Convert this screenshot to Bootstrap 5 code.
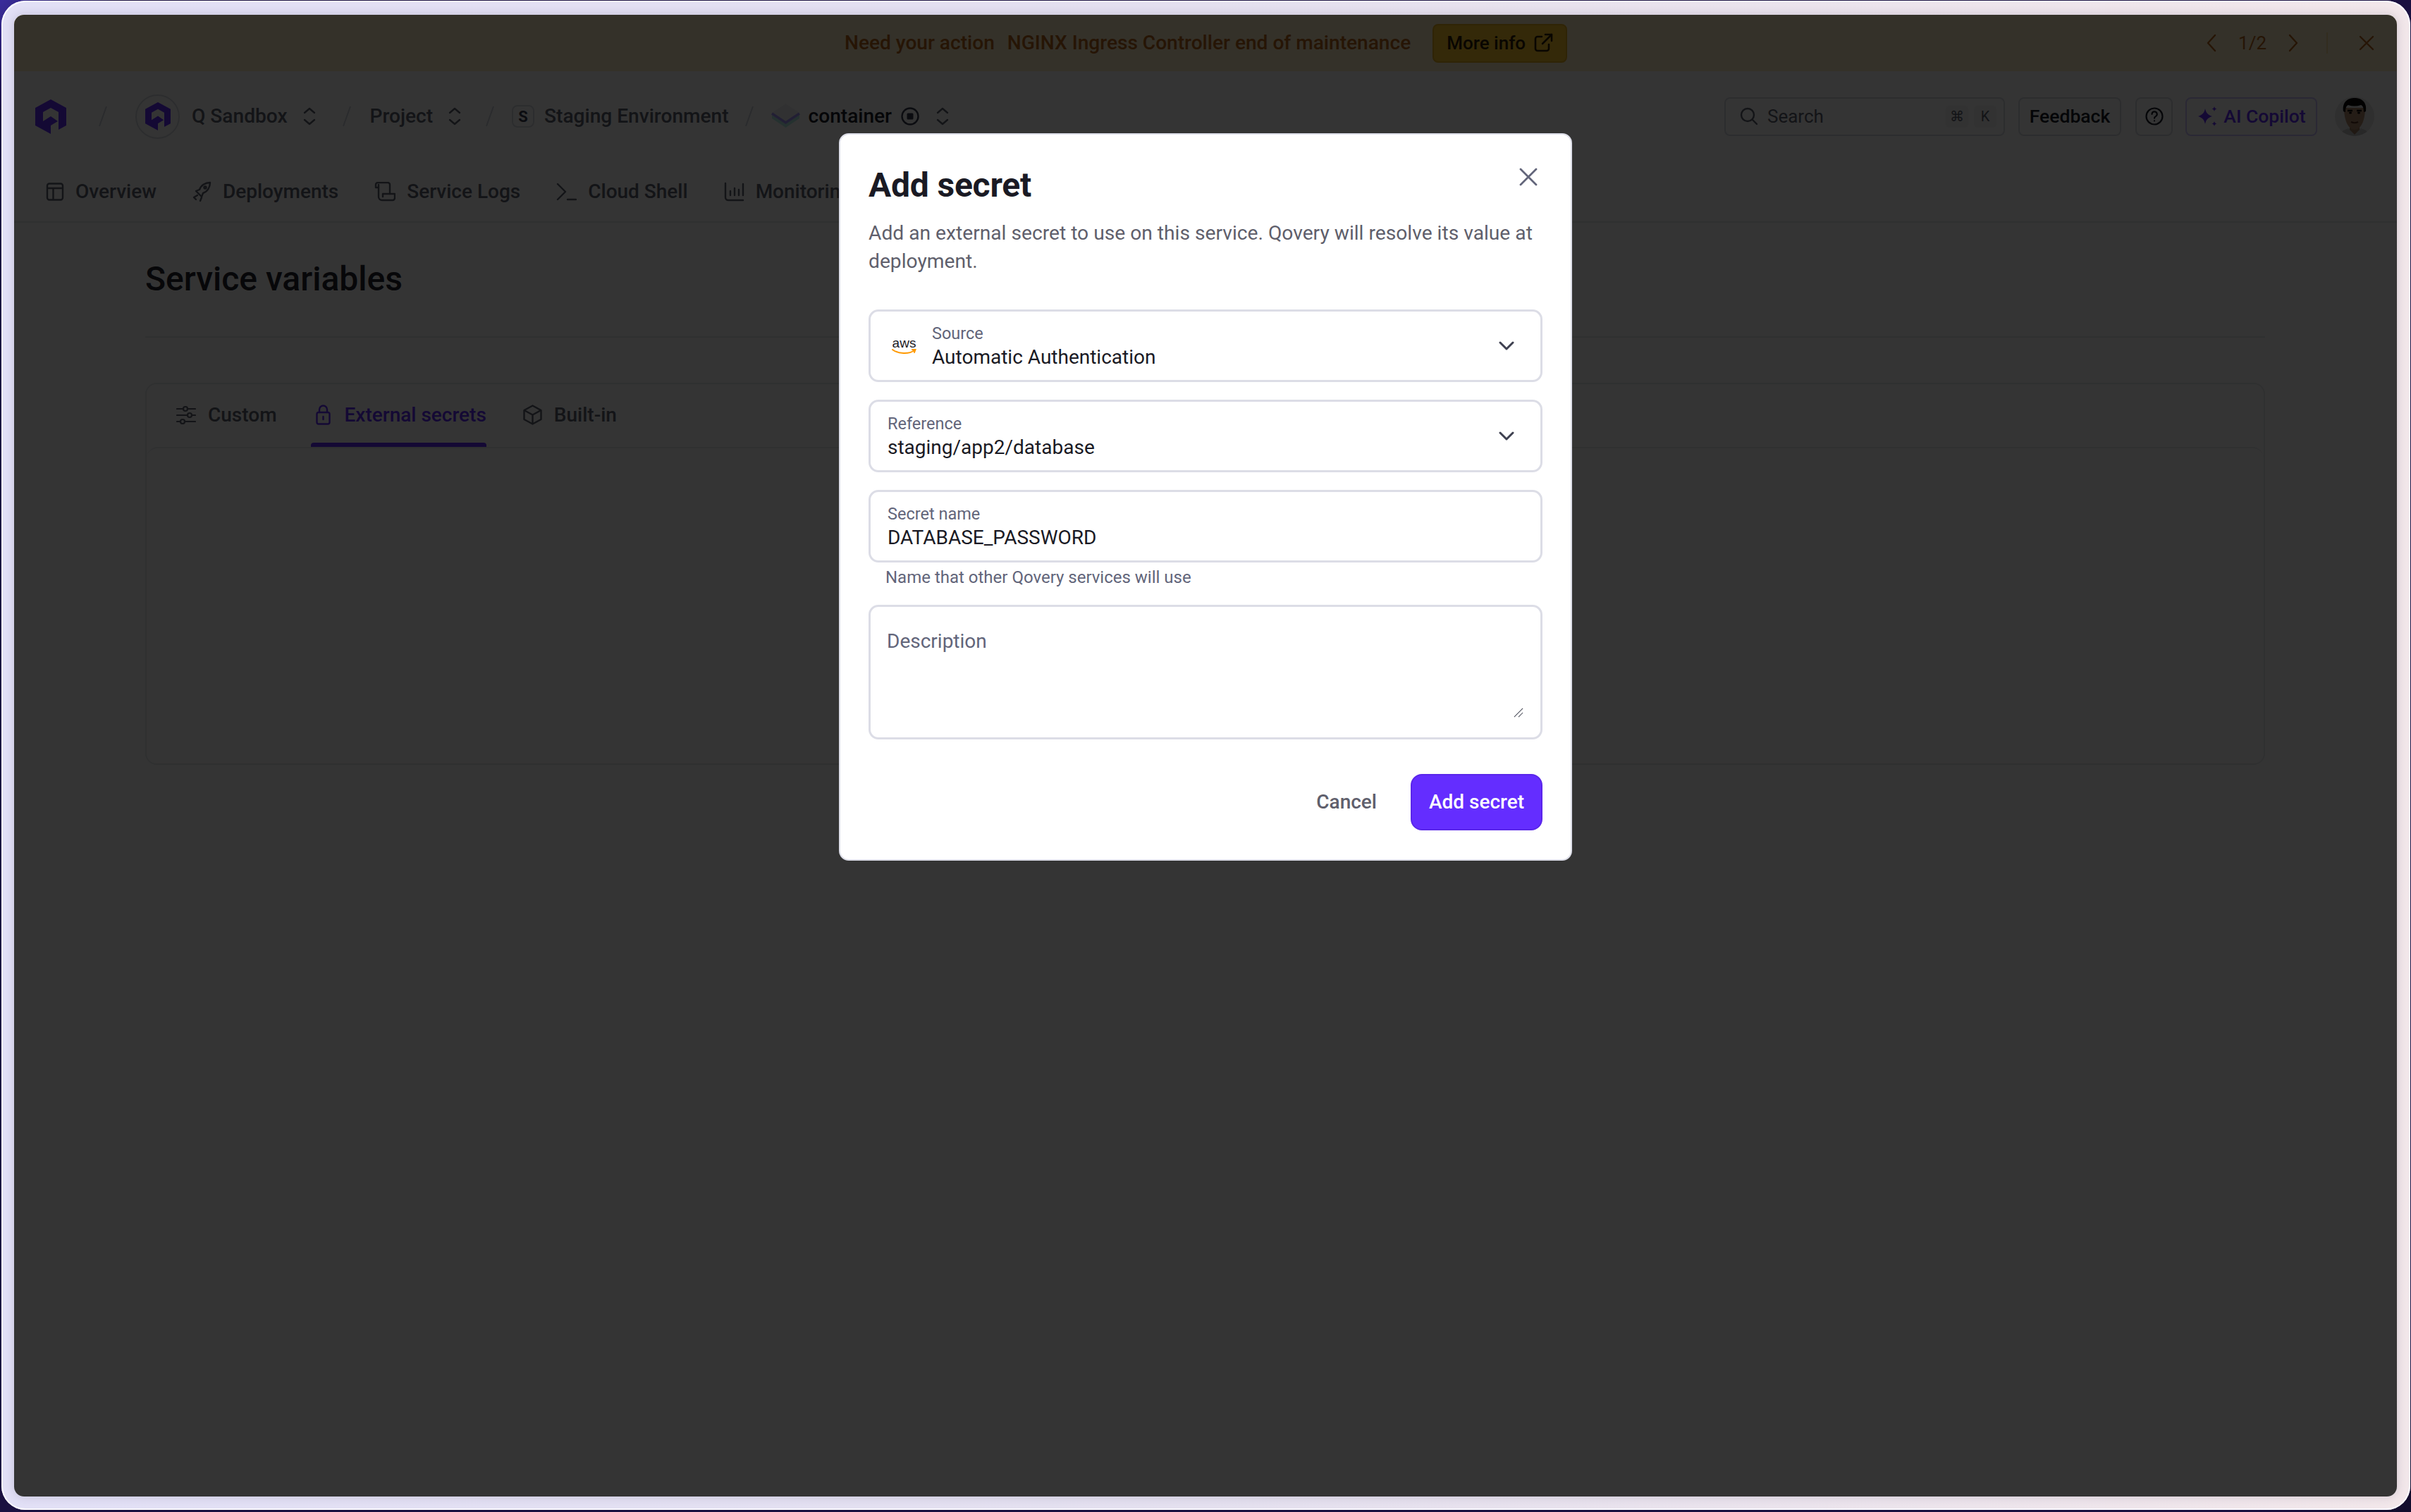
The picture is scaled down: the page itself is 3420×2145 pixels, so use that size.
<!DOCTYPE html>
<html lang="en">
<head>
<meta charset="UTF-8">
<meta name="viewport" content="width=device-width, initial-scale=1.0">
<title>Service variables</title>
<link href="https://cdn.jsdelivr.net/npm/bootstrap@5.3.3/dist/css/bootstrap.min.css" rel="stylesheet">
<style>
    html, body { height: 100%; }
    body {
        margin: 0; overflow: hidden; font-family: Roboto, sans-serif; font-size: 26px; color: #383e50;
        background: linear-gradient(135deg, #3a2d9c 0%, #1a1040 3%, #1a1040 96%, #120c2c 100%);
    }
    svg { display: block; flex: none; }
    .frame {
        height: 2141px; margin: 1px 1px 3px 2px; padding: 20px 19px 19px 18px; border-radius: 34px;
        background: linear-gradient(90deg, #e2e0f6, #e4e0ef 50%, #f2e7ea);
        box-shadow: inset 0 0 0 2px #fbfaff;
    }
    .panel {
        position: relative; height: 100%; overflow: hidden; background: #fff; border-radius: 14px;
        box-shadow: 0 0 14px rgba(60, 50, 90, .18);
    }
    .scrim { position: absolute; inset: 0; background: rgba(0, 0, 0, .795); z-index: 10; }

    /* announcement */
    .promo { height: 80px; background: #fff0c8; color: #b8661c; font-size: 28.1px; font-weight: 500; }
    .promo-msg { margin-left: 1178px; }
    .promo-msg span + span { margin-left: 18px; }
    .promo-btn {
        height: 55px; margin-left: 31px; padding: 0 18px; font-size: 26px; font-weight: 500; color: #2e2105;
        background: #ffc830; border: 2px solid #e6ae20; border-radius: 8px; gap: 11px;
    }
    .promo-pager { margin-left: auto; margin-right: 32px; color: #b8661c; font-size: 26px; font-weight: 400; }
    .promo-rule { width: 2px; height: 30px; background: #f5dc9a; margin: 0 44px 0 40px; }

    /* top bar */
    .topbar { height: 128px; padding: 0 32px 0 30px; }
    .crumb-sep { width: 12px; height: 30px; color: #ced2dc; }
    .org-ring { width: 63px; height: 63px; border: 2px solid #d9dbe3; border-radius: 50%; }
    .crumb-label { font-size: 28.1px; font-weight: 500; color: #5d6270; white-space: nowrap; }
    .crumb-current { color: #1a1d2b; }
    .env-badge {
        width: 32px; height: 32px; border: 2px solid #d9dbe3; border-radius: 8px; font-size: 22px; font-weight: 700; color: #383e50;
    }
    .updown { color: #5d6270; }
    .s12 { margin-left: 12px; } .s13 { margin-left: 13px; } .s14 { margin-left: 14px; } .s17 { margin-left: 17px; }
    .s21 { margin-left: 21px; } .s23 { margin-left: 23px; } .s25 { margin-left: 25px; } .s27 { margin-left: 27px; } .s31 { margin-left: 31px; }
    .s34 { margin-left: 34px; } .s37 { margin-left: 37px; } .s40 { margin-left: 40px; } .s46 { margin-left: 46px; }
    .tool-btn {
        height: 55px; padding: 0; font-size: 26.5px; font-weight: 500; color: #1a1d2b; background: #fff;
        border: 2px solid #d9dbe3; border-radius: 8px;
    }
    .search-box {
        width: 398px; height: 55px; padding: 0 10px 0 20px; border: 2px solid #d9dbe3; border-radius: 8px;
        color: #5d6270; font-size: 26px;
    }
    .key-cap {
        width: 32px; height: 31px; border-radius: 5px; background: #f4f4f6; color: #5d6270; font-size: 20px;
    }
    .btn-feedback { width: 146px; margin-left: 19px; }
    .btn-help { width: 53px; margin-left: 20px; }
    .btn-copilot { width: 187px; margin-left: 18px; padding-left: 2px; color: #642dff; border-color: #cfc2ff; gap: 8px; }
    .avatar-pic { width: 56px; height: 56px; margin-left: 25px; border-radius: 50%; overflow: hidden; }

    /* service tabs */
    .service-tabs { height: 87px; padding-left: 45px; border-bottom: 2px solid #e7e8ec; gap: 51px; }
    .service-tab { gap: 16px; font-size: 28px; font-weight: 500; color: #5d6270; white-space: nowrap; }

    /* variables page */
    .page-body { padding: 50px 187px 0 186px; }
    .page-head { height: 113px; border-bottom: 2px solid #e7e8ec; }
    .page-title { font-size: 48px; line-height: 60px; font-weight: 500; margin: 0; color: #222530; }
    .vars-card { margin-top: 64px; height: 542px; border: 2px solid #e7e8ec; border-radius: 16px; background: #fff; }
    .vars-tabs { height: 89px; padding-left: 40px; gap: 0; }
    .vars-tab {
        position: relative; height: 89px; gap: 17px; padding: 0 2px 2px; margin-right: 46px;
        font-size: 28px; font-weight: 500; color: #5d6270;
    }
    .vars-tab-on { color: #642dff; padding: 0 0 2px 7px; margin-right: 50px; gap: 20px; }
    .vars-tab-on::after {
        content: ""; position: absolute; left: 0; right: 0; bottom: 0; height: 6px; background: #642dff; border-radius: 4px 4px 0 0;
    }
    .vars-body { flex: 1; border-top: 2px solid #e7e8ec; border-radius: 16px 16px 0 0; }

    /* dialog */
    .dialog-wrap { position: absolute; inset: 0; z-index: 20; padding-top: 168px; }
    .dialog {
        position: relative; width: 1040px; height: 1032px; padding: 42px 40px 0 40px;
        border: 2px solid #dddee8; border-radius: 14px; background: #fff;
    }
    .dialog-title { font-size: 48px; line-height: 60px; font-weight: 700; color: #1a1a24; margin: 0 0 18px; letter-spacing: -.2px; }
    .dialog-desc { font-size: 28.2px; line-height: 40px; color: #5f5f6c; margin: 0 0 48px; }
    .dialog-close { position: absolute; top: 47px; right: 47px; width: 26px; height: 26px; padding: 0; border: 0; background: none; color: #62657a; }
    .fld {
        height: 103px; margin-bottom: 25px; padding: 0 37px 0 24px; border: 3px solid #dcdde6; border-radius: 14px;
    }
    .fld-aws { padding-left: 30px; }
    .fld-label { font-size: 23.5px; line-height: 32px; color: #62657a; }
    .fld-value { font-size: 28px; line-height: 36px; color: #1a1a24; }
    .aws-mark { width: 35px; margin-right: 22px; flex: none; color: #1a1a24; font-family: "Liberation Sans", sans-serif; font-size: 19px; line-height: 17px; text-align: center; }
    .fld-hint { font-size: 24px; line-height: 32px; color: #62657a; margin: 5px 0 23px 24px; }
    .fld-area { position: relative; height: 191px; padding: 30px 25px 31px; margin-bottom: 49px; border: 3px solid #dcdde6; border-radius: 14px; }
    .fld-area label { position: absolute; left: 23px; top: 29px; font-size: 28px; line-height: 40px; color: #62657a; }
    .fld-area textarea { display: block; width: 100%; height: 124px; padding: 0; border: 0; outline: 0; background: none; resize: none; }
    .grip { position: absolute; right: 24px; bottom: 28px; }
    .btn-plain { padding: 0; margin-right: 48px; font-size: 28px; font-weight: 500; color: #5f5f6c; background: none; border: 0; }
    .btn-violet {
        width: 187px; height: 80px; padding: 0; font-size: 28px; font-weight: 500; color: #fff;
        background: #642dff; border: 2px solid #5a26ea; border-radius: 16px;
    }
</style>
</head>
<body>
<div class="frame">
    <div class="panel">
        <div class="promo d-flex align-items-center">
            <div class="promo-msg"><span>Need your action</span><span>NGINX Ingress Controller end of maintenance</span></div>
            <button class="btn promo-btn d-flex align-items-center">More info
                <svg width="28" height="28" viewBox="0 0 28 28" fill="none" stroke="currentColor" stroke-width="2.6" stroke-linecap="round" stroke-linejoin="round"><path d="M12 5H6a3 3 0 0 0-3 3v14a3 3 0 0 0 3 3h13a3 3 0 0 0 3-3v-6"/><path d="M13 15 26 2"/><path d="M17 2h9v9"/></svg>
            </button>
            <div class="promo-pager d-flex align-items-center">
                <svg width="14" height="26" viewBox="0 0 14 26" fill="none" stroke="currentColor" stroke-width="2.4" stroke-linecap="round" stroke-linejoin="round"><path d="M12 2 2 13l10 11"/></svg>
                <span class="s31">1/2</span>
                <svg class="s31" width="14" height="26" viewBox="0 0 14 26" fill="none" stroke="currentColor" stroke-width="2.4" stroke-linecap="round" stroke-linejoin="round"><path d="m2 2 10 11L2 24"/></svg>
                <span class="promo-rule"></span>
                <svg width="22" height="22" viewBox="0 0 22 22" fill="none" stroke="currentColor" stroke-width="2.4" stroke-linecap="round"><path d="M2 2l18 18M20 2 2 20"/></svg>
            </div>
        </div>

        <div class="topbar d-flex align-items-center">
            <svg width="44" height="49" viewBox="0 0 44 49" fill="#642dff"><path d="M22 0 44 12V37L33 43V18L22 12 11 18V31L22 24 32 31 22 37V49L0 37V12Z"/></svg>
            <svg class="crumb-sep s46" viewBox="0 0 12 30" fill="none" stroke="currentColor" stroke-width="2"><path d="M11 1 1 29"/></svg>
            <div class="org-ring s40 d-flex align-items-center justify-content-center">
                <svg width="36" height="40" viewBox="0 0 44 49" fill="#642dff"><path d="M22 0 44 12V37L33 43V18L22 12 11 18V31L22 24 32 31 22 37V49L0 37V12Z"/></svg>
            </div>
            <span class="crumb-label s17">Q Sandbox</span>
            <svg class="updown s21" width="20" height="26" viewBox="0 0 20 26" fill="none" stroke="currentColor" stroke-width="2.4" stroke-linecap="round" stroke-linejoin="round"><path d="m3 8 7-6 7 6M3 18l7 6 7-6"/></svg>
            <svg class="crumb-sep s37" viewBox="0 0 12 30" fill="none" stroke="currentColor" stroke-width="2"><path d="M11 1 1 29"/></svg>
            <span class="crumb-label s27">Project</span>
            <svg class="updown s21" width="20" height="26" viewBox="0 0 20 26" fill="none" stroke="currentColor" stroke-width="2.4" stroke-linecap="round" stroke-linejoin="round"><path d="m3 8 7-6 7 6M3 18l7 6 7-6"/></svg>
            <svg class="crumb-sep s34" viewBox="0 0 12 30" fill="none" stroke="currentColor" stroke-width="2"><path d="M11 1 1 29"/></svg>
            <span class="env-badge s25 d-flex align-items-center justify-content-center">S</span>
            <span class="crumb-label s14">Staging Environment</span>
            <svg class="crumb-sep s23" viewBox="0 0 12 30" fill="none" stroke="currentColor" stroke-width="2"><path d="M11 1 1 29"/></svg>
            <svg class="s25" width="41" height="36" viewBox="0 0 41 36"><path d="M20.5 0 40 13 20.5 25 1 13Z" fill="#f0f1f5"/><path d="M1 16v5l19.500 13L40 21v-5L20.500 28Z" fill="#b4efe6"/><path d="M1 14l19.500 13L40 14" fill="none" stroke="#a898ff" stroke-width="3.500"/></svg>
            <span class="crumb-label crumb-current s12">container</span>
            <svg class="s13" width="26" height="26" viewBox="0 0 26 26"><circle cx="13" cy="13" r="11.5" fill="none" stroke="#383e50" stroke-width="2.4"/><rect x="8.5" y="8.5" width="9" height="9" rx="1.5" fill="#383e50"/></svg>
            <svg class="updown s23" width="20" height="26" viewBox="0 0 20 26" fill="none" stroke="currentColor" stroke-width="2.4" stroke-linecap="round" stroke-linejoin="round"><path d="m3 8 7-6 7 6M3 18l7 6 7-6"/></svg>

            <div class="search-box ms-auto d-flex align-items-center">
                <svg width="26" height="26" viewBox="0 0 26 26" fill="none" stroke="currentColor" stroke-width="2.4" stroke-linecap="round"><circle cx="11" cy="11" r="9"/><path d="m18 18 6 6"/></svg>
                <span class="s13">Search</span>
                <span class="key-cap ms-auto d-flex align-items-center justify-content-center">⌘</span>
                <span class="key-cap d-flex align-items-center justify-content-center ms-2">K</span>
            </div>
            <button class="btn tool-btn btn-feedback">Feedback</button>
            <button class="btn tool-btn btn-help d-flex align-items-center justify-content-center">
                <svg width="26" height="26" viewBox="0 0 26 26" fill="none" stroke="#1a1d2b" stroke-width="2.2" stroke-linecap="round"><circle cx="13" cy="13" r="11.5"/><path d="M9.5 10a3.6 3.6 0 1 1 5.4 3.1c-1.2.7-1.9 1.4-1.9 2.6"/><path d="M13 19.4v.1"/></svg>
            </button>
            <button class="btn tool-btn btn-copilot d-flex align-items-center justify-content-center">
                <svg width="28" height="28" viewBox="0 0 28 28" fill="currentColor"><path d="M10 3c1.200 6 4 9.200 10 11-6 1.800-8.800 5-10 11C8.800 19 6 15.800 0 14c6-1.800 8.800-5 10-11Z"/><path d="M23 0c.5 2 1.200 3 3.500 3.500C24.200 4 23.500 5 23 7c-.5-2-1.200-3-3.500-3.500C21.800 3 22.500 2 23 0ZM23 21c.5 2 1.200 3 3.500 3.500C24.200 25 23.500 26 23 28c-.5-2-1.200-3-3.500-3.500 2.300-.5 3-1.500 3.500-3.500Z"/></svg>
                AI Copilot
            </button>
            <div class="avatar-pic">
                <svg width="56" height="56" viewBox="0 0 56 56"><rect width="56" height="56" fill="#e6e6e6"/><path d="M6 56c2-7 8-9 13-11l9 4 9-4c5 2 11 4 13 11Z" fill="#c4c4c4"/><path d="M21 38h14v9l-7 7-7-7Z" fill="#9c7a60"/><path d="M13 16c0 14 4 30 15 31 11-1 15-17 15-31Z" fill="#b0896c"/><path d="M12 21C10 7 19 2 28 2s18 5 16 19l-3 1c0-5-1-9-4-10-6 2-12 2-18 0-3 1-4 5-4 10Z" fill="#0a0606"/><path d="M18 20h7M31 20h7" stroke="#0a0606" stroke-width="2.500"/><ellipse cx="22" cy="23" rx="2" ry="1.500" fill="#0a0606"/><ellipse cx="34" cy="23" rx="2" ry="1.500" fill="#0a0606"/><path d="M23 36c3 1.500 7 1.500 10 0" stroke="#5a3324" stroke-width="2" fill="none"/></svg>
            </div>
        </div>

        <div class="service-tabs d-flex align-items-center">
            <div class="service-tab d-flex align-items-center">
                <svg width="26" height="26" viewBox="0 0 25 26" fill="none" stroke="currentColor" stroke-width="2.4" stroke-linejoin="round"><rect x="1.500" y="1.500" width="22" height="23" rx="3"/><path d="M1.500 8h22M10 8v16"/></svg>Overview</div>
            <div class="service-tab d-flex align-items-center">
                <svg width="27" height="30" viewBox="0 0 27 30" fill="none" stroke="currentColor" stroke-width="2.4" stroke-linecap="round" stroke-linejoin="round"><path d="M25 2c-7 0-13 4-15 10l-5 2 3 3 2 2 3 3 2-5c6-2 10-8 10-15Z"/><circle cx="18" cy="9" r="1.500"/><path d="m7 20-5 3 3 3M13 23l-2 5"/></svg>Deployments</div>
            <div class="service-tab d-flex align-items-center">
                <svg width="30" height="28" viewBox="0 0 30 28" fill="none" stroke="currentColor" stroke-width="2.4" stroke-linecap="round" stroke-linejoin="round"><path d="M6 8H2V4a3 3 0 0 1 3-3h14a3 3 0 0 1 3 3v13"/><path d="M6 4v17a5 5 0 0 0 5 5h15a3 3 0 0 0 3-3v-6H12v4"/></svg>Service Logs</div>
            <div class="service-tab d-flex align-items-center">
                <svg width="29" height="26" viewBox="0 0 29 26" fill="none" stroke="currentColor" stroke-width="2.4" stroke-linecap="round" stroke-linejoin="round"><path d="m2 2 11 11L2 24M16 24h12"/></svg>Cloud Shell</div>
            <div class="service-tab d-flex align-items-center">
                <svg width="29" height="28" viewBox="0 0 29 28" fill="none" stroke="currentColor" stroke-width="2.4" stroke-linecap="round"><path d="M2 2v20a4 4 0 0 0 4 4h21M9 19v-6M15 19V9M21 19v-8M27 19V3"/></svg>Monitoring</div>
        </div>

        <div class="page-body">
            <div class="page-head"><h1 class="page-title">Service variables</h1></div>
            <div class="card vars-card d-flex flex-column">
                <div class="vars-tabs d-flex align-items-center">
                    <div class="vars-tab d-flex align-items-center">
                        <svg width="28" height="26" viewBox="0 0 28 26" fill="none" stroke="currentColor" stroke-width="2.200" stroke-linecap="round"><path d="M1 4h8M17 4h10M1 13h14M23 13h4M1 22h4M13 22h14"/><circle cx="13" cy="4" r="3"/><circle cx="19" cy="13" r="3"/><circle cx="9" cy="22" r="3"/></svg>Custom</div>
                    <div class="vars-tab vars-tab-on d-flex align-items-center">
                        <svg width="21" height="29" viewBox="0 0 21 29" fill="none" stroke="currentColor" stroke-width="2.400" stroke-linecap="round"><rect x="1.500" y="11" width="18" height="16.500" rx="2.500"/><path d="M5 11V7a5.500 5.500 0 0 1 11 0v4M10.500 17v4"/></svg>External secrets</div>
                    <div class="vars-tab d-flex align-items-center">
                        <svg width="27" height="29" viewBox="0 0 27 29" fill="none" stroke="currentColor" stroke-width="2.400" stroke-linejoin="round"><path d="M13.500 1.500 25.500 8v13l-12 6.500L1.500 21V8Z"/><path d="M1.500 8l12 6.500L25.500 8M13.500 14.500v13"/></svg>Built-in</div>
                </div>
                <div class="vars-body"></div>
            </div>
        </div>

        <div class="scrim"></div>

        <div class="dialog-wrap d-flex justify-content-center align-items-start">
            <div class="dialog modal-content">
                <button class="dialog-close" aria-label="Close">
                    <svg width="26" height="26" viewBox="0 0 26 26" fill="none" stroke="currentColor" stroke-width="2.800" stroke-linecap="round"><path d="m2 2 22 22M24 2 2 24"/></svg>
                </button>
                <h2 class="dialog-title">Add secret</h2>
                <p class="dialog-desc">Add an external secret to use on this service. Qovery will resolve its value at deployment.</p>

                <div class="fld fld-aws d-flex align-items-center">
                    <div class="aws-mark">aws
                        <svg width="35" height="9" viewBox="0 0 35 9" fill="none" stroke="#ff9900" stroke-width="2" stroke-linecap="round"><path d="M1 1c8 6 23 7 31 1M29 1h4.500L32 5"/></svg>
                    </div>
                    <div class="flex-grow-1">
                        <div class="fld-label">Source</div>
                        <div class="fld-value">Automatic Authentication</div>
                    </div>
                    <svg width="22" height="14" viewBox="0 0 22 14" fill="none" stroke="#3e4050" stroke-width="3" stroke-linecap="round" stroke-linejoin="round"><path d="m2 2 9 9 9-9"/></svg>
                </div>

                <div class="fld d-flex align-items-center">
                    <div class="flex-grow-1">
                        <div class="fld-label">Reference</div>
                        <div class="fld-value">staging/app2/database</div>
                    </div>
                    <svg width="22" height="14" viewBox="0 0 22 14" fill="none" stroke="#3e4050" stroke-width="3" stroke-linecap="round" stroke-linejoin="round"><path d="m2 2 9 9 9-9"/></svg>
                </div>

                <div class="fld mb-0 d-flex align-items-center">
                    <div class="flex-grow-1">
                        <div class="fld-label">Secret name</div>
                        <div class="fld-value">DATABASE_PASSWORD</div>
                    </div>
                </div>
                <div class="fld-hint">Name that other Qovery services will use</div>

                <div class="fld-area">
                    <label for="secretDesc">Description</label>
                    <textarea id="secretDesc"></textarea>
                    <svg class="grip" width="14" height="14" viewBox="0 0 16 16" fill="none" stroke="#4a4c58" stroke-width="1.200"><path d="M1 15 15 1M8 15l7-7"/></svg>
                </div>

                <div class="d-flex justify-content-end align-items-center">
                    <button class="btn btn-plain">Cancel</button>
                    <button class="btn btn-violet">Add secret</button>
                </div>
            </div>
        </div>
    </div>
</div>
<script src="https://cdn.jsdelivr.net/npm/bootstrap@5.3.3/dist/js/bootstrap.bundle.min.js"></script>
</body>
</html>
